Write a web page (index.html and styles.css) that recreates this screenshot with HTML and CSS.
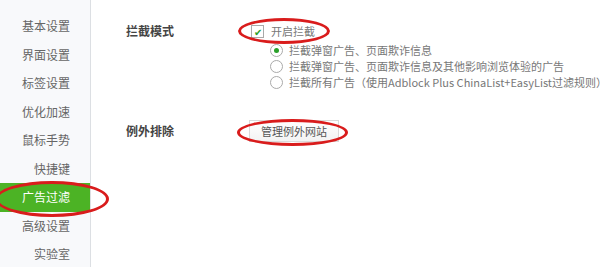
FILE: index.html
```html
<!DOCTYPE html>
<html lang="zh-CN">
<head>
  <meta charset="UTF-8">
  <title>广告过滤</title>
  <link rel="stylesheet" href="styles.css">
</head>
<body>
  <div class="sidebar">
    <div class="item">基本设置</div>
    <div class="item">界面设置</div>
    <div class="item">标签设置</div>
    <div class="item">优化加速</div>
    <div class="item">鼠标手势</div>
    <div class="item">快捷键</div>
    <div class="item active">广告过滤</div>
    <div class="item">高级设置</div>
    <div class="item">实验室</div>
  </div>
  <div class="main">
    <div class="row">
      <div class="label">拦截模式</div>
      <div class="field">
        <div class="check"><span class="box">&#10004;</span>开启拦截</div>
        <div class="radios">
          <div class="radio on"><span class="dot"></span>拦截弹窗广告、页面欺诈信息</div>
          <div class="radio"><span class="dot"></span>拦截弹窗广告、页面欺诈信息及其他影响浏览体验的广告</div>
          <div class="radio"><span class="dot"></span>拦截所有广告（使用Adblock Plus ChinaList+EasyList过滤规则）</div>
        </div>
      </div>
    </div>
    <div class="row except">
      <div class="label">例外排除</div>
      <div class="field">
        <button class="button">管理例外网站</button>
      </div>
    </div>
  </div>
  <div class="mark mark-check"></div>
  <div class="mark mark-button"></div>
  <div class="mark mark-menu"></div>
</body>
</html>
```

FILE: styles.css
```css
html,body{height: 100%;margin: 0;}
body{
  display: flex;
  font-family: "Microsoft YaHei", "Noto Sans CJK SC", sans-serif;
  font-size: 11px;
  background: #fff;
  color: #555;
  overflow: hidden;
  position: relative;
}
.sidebar{
  width: 90px;
  flex: none;
  background: #f8f9fb;
  border-right: 1px solid #dcdfe3;
  padding-top: 12px;
}
.item{
  height: 28.5px;
  line-height: 28.5px;
  text-align: right;
  padding-right: 20px;
  font-size: 12px;
  color: #666;
}
.item.active{
  background: #4cb325;
  color: #fff;
}
.main{
  flex: 1;
  min-width: 0;
  padding: 20px 0 0 35px;
  white-space: nowrap;
}
.row{
  display: flex;
}
.label{
  width: 125px;
  flex: none;
  font-size: 12px;
  font-weight: bold;
  color: #444;
  line-height: 22px;
}
.check{
  display: flex;
  align-items: center;
  height: 22px;
  color: #777;
}
.box{
  width: 11px;
  height: 11px;
  border: 1px solid #aaa;
  margin-right: 7px;
  font-size: 10px;
  line-height: 11px;
  text-align: center;
  color: #2aa02a;
}
.radios{
  padding-left: 19px;
}
.radio{
  display: flex;
  align-items: center;
  height: 16px;
  color: #777;
}
.dot{
  width: 11px;
  height: 11px;
  flex: none;
  border: 1px solid #aaa;
  border-radius: 50%;
  margin-right: 6px;
  position: relative;
}
.radio.on .dot::after{
  content: "";
  position: absolute;
  left: 3px;
  top: 3px;
  width: 5px;
  height: 5px;
  border-radius: 50%;
  background: #2aa02a;
}
.except{
  margin-top: 30px;
}
.button{
  font-family: inherit;
  font-size: 11px;
  color: #555;
  background: linear-gradient(#fff, #f3f3f3);
  border: 1px solid #dadada;
  height: 22px;
  padding: 0 11px;
  margin-left: -2px;
}
.mark{
  position: absolute;
  border: 3px solid #d91c1c;
  border-radius: 50%;
}
.mark-check{left: 238px; top: 18px; width: 86px; height: 20px;}
.mark-button{left: 237px; top: 119px; width: 105px; height: 21px;}
.mark-menu{top: 181px; width: 108px; height: 30px; left: -5px;}
```
